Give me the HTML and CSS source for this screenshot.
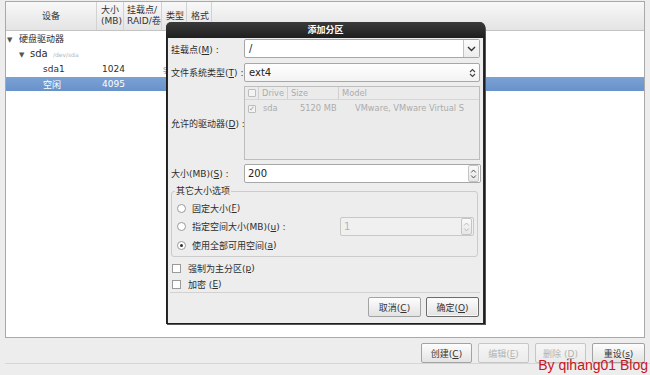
FILE: index.html
```html
<!DOCTYPE html>
<html>
<head>
    <meta charset="utf-8">
    <title>添加分区</title>
    <link rel="stylesheet" href="styles.css">
</head>
<body>
<div class="screen">
    <div class="panel">
        <div class="thead">
            <div class="th col-dev center">设备</div>
            <div class="th col-size">大小<br>(MB)</div>
            <div class="th col-mount">挂载点/<br>RAID/卷</div>
            <div class="th col-type">类型</div>
            <div class="th col-fmt">格式</div>
            <div class="th col-rest"></div>
        </div>
        <div class="tbody">
            <div class="trow">
                <div class="td col-dev"><span class="expander">&#9660;</span>硬盘驱动器</div>
            </div>
            <div class="trow">
                <div class="td col-dev lvl1"><span class="expander">&#9660;</span>sda <span class="devpath">/dev/sda</span></div>
            </div>
            <div class="trow">
                <div class="td col-dev lvl2">sda1</div>
                <div class="td col-size">1024</div>
                <div class="td col-mount"></div>
                <div class="td col-type"><span class="fs-mark">ş</span></div>
            </div>
            <div class="trow selected">
                <div class="td col-dev lvl2">空闲</div>
                <div class="td col-size">4095</div>
            </div>
        </div>
    </div>

    <div class="actions">
        <button class="btn wide">创建(<u>C</u>)</button>
        <button class="btn wide" disabled>编辑(<u>E</u>)</button>
        <button class="btn wide" disabled>删除 (<u>D</u>)</button>
        <button class="btn wider">重设(<u>s</u>)</button>
    </div>

    <div class="watermark">By qihang01 Blog</div>

    <div class="dialog">
        <div class="dlg-title">添加分区</div>
        <div class="dlg-body">
            <div class="form">
                <label class="lbl">挂载点(<u>M</u>) :</label>
                <div class="combo editable">
                    <span class="combo-text">/</span>
                    <span class="combo-btn">
                        <svg width="9" height="6" viewBox="0 0 9 6"><path d="M1 1 L4.5 4.5 L8 1" fill="none" stroke="#333" stroke-width="1.4"/></svg>
                    </span>
                </div>

                <label class="lbl">文件系统类型(<u>T</u>) :</label>
                <div class="combo">
                    <span class="combo-text">ext4</span>
                    <span class="combo-arrows">
                        <svg width="7" height="10" viewBox="0 0 7 10"><path d="M1 4 L3.5 1.5 L6 4 M1 6 L3.5 8.5 L6 6" fill="none" stroke="#444" stroke-width="1.1"/></svg>
                    </span>
                </div>

                <label class="lbl lbl-list">允许的驱动器(<u>D</u>) :</label>
                <div class="drives">
                    <div class="drv-head">
                        <span class="dh dh-check"><span class="box"></span></span>
                        <span class="dh dh-drive">Drive</span>
                        <span class="dh dh-size">Size</span>
                        <span class="dh dh-model">Model</span>
                    </div>
                    <div class="drv-row">
                        <span class="dr-check"><span class="box checked">&#10003;</span></span>
                        <span class="dr-drive">sda</span>
                        <span class="dr-size">5120 MB</span>
                        <span class="dr-model">VMware, VMware Virtual S</span>
                    </div>
                </div>

                <label class="lbl">大小(MB)(<u>S</u>) :</label>
                <div class="spin">
                    <span class="spin-text">200</span>
                    <span class="spin-btns">
                        <svg width="7" height="12" viewBox="0 0 7 12"><path d="M1.2 4.5 L3.5 2 L5.8 4.5 M1.2 7.5 L3.5 10 L5.8 7.5" fill="none" stroke="#555" stroke-width="1"/></svg>
                    </span>
                </div>
            </div>

            <fieldset class="frame">
                <legend>其它大小选项</legend>
                <div class="opt-row">
                    <span class="radio"></span>固定大小(<u>F</u>)
                </div>
                <div class="opt-row mid">
                    <span class="radio"></span>指定空间大小(MB)(<u>u</u>) :
                    <div class="spin small disabled">
                        <span class="spin-text">1</span>
                        <span class="spin-btns">
                            <svg width="7" height="12" viewBox="0 0 7 12"><path d="M1.2 4.5 L3.5 2 L5.8 4.5 M1.2 7.5 L3.5 10 L5.8 7.5" fill="none" stroke="#bbb" stroke-width="1"/></svg>
                        </span>
                    </div>
                </div>
                <div class="opt-row">
                    <span class="radio on"></span>使用全部可用空间(<u>a</u>)
                </div>
            </fieldset>

            <div class="checks">
                <div class="check-row"><span class="check"></span>强制为主分区(<u>p</u>)</div>
                <div class="check-row"><span class="check"></span>加密 (<u>E</u>)</div>
            </div>

            <div class="dlg-sep"></div>

            <div class="dlg-buttons">
                <button class="btn">取消(<u>C</u>)</button>
                <button class="btn default">确定(<u>O</u>)</button>
            </div>
        </div>
    </div>
</div>
</body>
</html>
```

FILE: styles.css
```css
body {
    margin: 0;
    padding: 0;
    background-color: #ededed;
    font-family: "DejaVu Sans", "Noto Sans CJK SC", sans-serif;
    font-size: 9px;
    color: #2e2e2e;
    overflow: hidden;
}

u {
    text-decoration: underline;
}

.screen {
    position: relative;
    width: 650px;
    height: 375px;
    display: flex;
    flex-direction: column;
}

/* main partition table */
.panel {
    margin: 1px 5px 0 5px;
    height: 337px;
    box-sizing: border-box;
    background-color: #fff;
    border: 1px solid #a9a9a9;
    display: flex;
    flex-direction: column;
}

.thead {
    display: flex;
    height: 28px;
    background: linear-gradient(#f8f8f8, #e4e4e4);
    border-bottom: 1px solid #c4c4c4;
}

.th {
    box-sizing: border-box;
    border-right: 1px solid #d2d2d2;
    display: flex;
    flex-direction: column;
    justify-content: center;
    padding-left: 4px;
    line-height: 11px;
    color: #333;
}

.th.center {
    align-items: center;
    padding-left: 0;
}

.col-dev { width: 91px; flex: none; }
.col-size { width: 27px; flex: none; }
.col-mount { width: 38px; flex: none; }
.col-type { width: 25px; flex: none; }
.col-fmt { width: 25px; flex: none; }
.col-rest { flex: 1; border-right: none; }

.th.col-mount { padding-left: 3px; }

.tbody {
    display: flex;
    flex-direction: column;
}

.trow {
    display: flex;
    height: 15px;
    align-items: center;
}

.trow.selected {
    height: 14px;
    margin-top: 1px;
    background: linear-gradient(#7ba2d5, #6892ca);
    color: #fff;
}

.td {
    box-sizing: border-box;
    white-space: nowrap;
}

.td.col-dev {
    padding-left: 1px;
}

.td.col-size {
    padding-left: 5px;
}

.lvl1 { padding-left: 13px !important; }
.lvl2 { padding-left: 37px !important; }

.expander {
    display: inline-block;
    width: 12px;
    font-size: 7px;
    color: #555;
}

.lvl1 .expander { width: 11px; }

.lvl1 {
    font-size: 10px;
}

.devpath {
    font-size: 6px;
    color: #b5b5b5;
    margin-left: 2px;
}

.fs-mark {
    color: #c88a1c;
    font-size: 9px;
    padding-left: 1px;
}

/* bottom buttons */
.actions {
    display: flex;
    justify-content: flex-end;
    gap: 6px;
    margin-top: 5px;
    padding-right: 5px;
    height: 20px;
    border-bottom: 1px solid #d6d6d6;
    margin-left: 5px;
}

.btn {
    font-family: "DejaVu Sans", "Noto Sans CJK SC", sans-serif;
    font-size: 9px;
    color: #333;
    height: 20px;
    padding: 0;
    box-sizing: border-box;
    border: 1px solid #a3a3a3;
    border-radius: 2px;
    background: linear-gradient(#fdfdfd, #e3e3e3);
}

.btn:disabled {
    color: #b4b4b4;
    border-color: #c6c6c6;
    background: linear-gradient(#f6f6f6, #ebebeb);
}

.btn.wide { width: 51px; }
.btn.wider { width: 53px; }

.watermark {
    position: absolute;
    right: 2px;
    bottom: 2px;
    font-family: "Liberation Sans", sans-serif;
    font-size: 14px;
    color: #c8141e;
    line-height: 16px;
}

/* dialog */
.dialog {
    position: absolute;
    left: 166px;
    top: 22px;
    width: 319px;
    height: 302px;
    box-sizing: border-box;
    display: flex;
    flex-direction: column;
    background-color: #ededed;
    border: 1px solid #1e1e1e;
    border-top: none;
    border-radius: 6px 6px 0 0;
    box-shadow: 1px 1px 0 #555;
}

.dlg-title {
    height: 16px;
    line-height: 16px;
    text-align: center;
    font-weight: bold;
    color: #fff;
    background: linear-gradient(#3a3a3a, #1f1f1f);
    border-radius: 5px 5px 0 0;
    margin: 0 -1px;
}

.dlg-body {
    flex: 1;
    display: flex;
    flex-direction: column;
    padding: 1px 3px 0 2px;
    border-left: 1px solid #2a2a2a;
    border-right: 1px solid #2a2a2a;
}

.form {
    display: grid;
    grid-template-columns: 74px 1fr;
    row-gap: 4px;
    align-items: center;
}

.lbl {
    padding-left: 1px;
    white-space: nowrap;
    color: #2e2e2e;
}

.combo {
    height: 19px;
    box-sizing: border-box;
    border: 1px solid #a7a7a7;
    border-radius: 2px;
    background: linear-gradient(#ffffff, #f3f3f3);
    display: flex;
    align-items: center;
}

.combo.editable {
    background: #fff;
    margin-bottom: 1px;
}

.combo-text {
    flex: 1;
    padding-left: 4px;
    font-size: 10px;
    color: #222;
}

.combo-btn {
    width: 15px;
    height: 100%;
    border-left: 1px solid #c2c2c2;
    display: flex;
    align-items: center;
    justify-content: center;
    background: linear-gradient(#fbfbfb, #ececec);
}

.combo-arrows {
    width: 14px;
    display: flex;
    justify-content: center;
}

.drives {
    height: 74px;
    box-sizing: border-box;
    border: 1px solid #bdbdbd;
    background-color: #ebebeb;
    color: #ababab;
    font-size: 8.3px;
}

.drv-head {
    display: flex;
    height: 12px;
    align-items: center;
    border-bottom: 1px solid #d6d6d6;
}

.dh {
    box-sizing: border-box;
    height: 100%;
    display: flex;
    align-items: center;
    border-right: 1px solid #cfcfcf;
    padding-left: 3px;
}

.dh-check { width: 14px; padding-left: 3px; }
.dh-drive { width: 29px; }
.dh-size { width: 51px; }
.dh-model { border-right: none; flex: 1; }

.box {
    display: inline-block;
    width: 6px;
    height: 6px;
    border: 1px solid #bdbdbd;
    border-radius: 1px;
    background: #f3f3f3;
    font-size: 7px;
    line-height: 6px;
    text-align: center;
    color: #9a9a9a;
}

.drv-row {
    display: flex;
    height: 15px;
    align-items: center;
}

.dr-check { width: 18px; padding-left: 3px; box-sizing: border-box; }
.dr-drive { width: 37px; }
.dr-size { width: 55px; }
.dr-model { white-space: nowrap; }

.spin {
    height: 19px;
    box-sizing: border-box;
    border: 1px solid #a7a7a7;
    border-radius: 2px;
    background: #fff;
    display: flex;
    align-items: center;
    margin-right: -1px;
}

.spin-text {
    flex: 1;
    padding-left: 3px;
    font-size: 10px;
    color: #222;
}

.spin-btns {
    width: 9px;
    height: 15px;
    margin-right: 1px;
    border: 1px solid #c4c4c4;
    border-radius: 2px;
    background: linear-gradient(#fafafa, #e6e6e6);
    display: flex;
    align-items: center;
    justify-content: center;
}

.spin.small {
    width: 134px;
    margin-left: auto;
    margin-right: 3px;
}

.spin.disabled {
    background: #f0f0f0;
    border-color: #c8c8c8;
}

.spin.disabled .spin-text {
    color: #b5b5b5;
}

.frame {
    margin: 3px 2px 0 1px;
    padding: 2px 0 2px 3px;
    border: 1px solid #cbcbcb;
    border-radius: 3px;
    min-width: 0;
}

.frame legend {
    padding: 0 1px;
    margin-left: 0;
    line-height: 11px;
}

.opt-row {
    display: flex;
    align-items: center;
    height: 18px;
    white-space: nowrap;
}

.opt-row.mid {
    height: 19px;
}

.radio {
    width: 7px;
    height: 7px;
    border: 1px solid #9a9a9a;
    border-radius: 50%;
    background: #fff;
    margin: 0 6px 0 2px;
    position: relative;
    flex: none;
}

.radio.on::after {
    content: "";
    position: absolute;
    left: 2px;
    top: 2px;
    width: 3px;
    height: 3px;
    border-radius: 50%;
    background: #333;
}

.checks {
    margin-top: 3px;
}

.check-row {
    display: flex;
    align-items: center;
    height: 16px;
    padding-left: 2px;
}

.check {
    width: 7px;
    height: 7px;
    border: 1px solid #9a9a9a;
    background: #fff;
    margin-right: 7px;
    flex: none;
}

.dlg-sep {
    height: 1px;
    background-color: #d2d2d2;
}

.dlg-buttons {
    display: flex;
    justify-content: flex-end;
    gap: 5px;
    margin-top: 4px;
    padding-right: 1px;
}

.dlg-buttons .btn {
    width: 53px;
    height: 20px;
}

.btn.default {
    border: 1px solid #6c6c6c;
    box-shadow: inset 0 0 0 1px #f7f7f7;
}
```
